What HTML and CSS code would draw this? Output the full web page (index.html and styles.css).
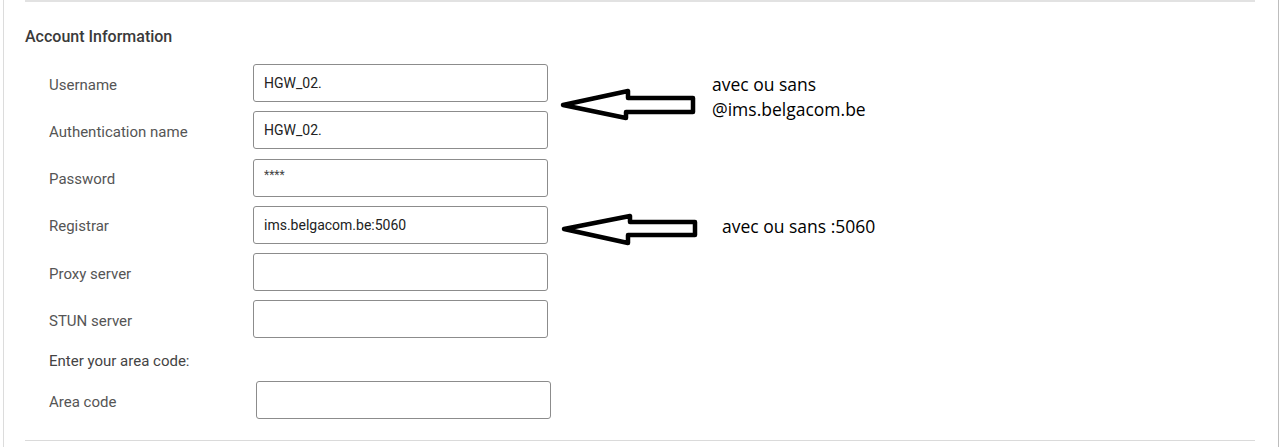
FILE: index.html
```html
<!DOCTYPE html>
<html lang="en">
<head>
    <meta charset="UTF-8">
    <meta name="viewport" content="width=device-width, initial-scale=1.0">
    <title>Account Information</title>
    <link rel="stylesheet" href="styles.css">
</head>
<body>
    <div class="page">
        <section class="panel">
            <h2 class="panel-title">Account Information</h2>

            <div class="form">
                <div class="row">
                    <label for="username">Username</label>
                    <input type="text" id="username" value="HGW_02.">
                </div>
                <div class="row">
                    <label for="authname">Authentication name</label>
                    <input type="text" id="authname" value="HGW_02.">
                </div>
                <div class="row">
                    <label for="password">Password</label>
                    <input type="text" id="password" class="secret" value="****">
                </div>
                <div class="row">
                    <label for="registrar">Registrar</label>
                    <input type="text" id="registrar" value="ims.belgacom.be:5060">
                </div>
                <div class="row">
                    <label for="proxy">Proxy server</label>
                    <input type="text" id="proxy">
                </div>
                <div class="row">
                    <label for="stun">STUN server</label>
                    <input type="text" id="stun">
                </div>

                <p class="hint">Enter your area code:</p>

                <div class="row row-area">
                    <label for="areacode">Area code</label>
                    <input type="text" id="areacode">
                </div>
            </div>
        </section>

        <!-- annotations drawn over the screenshot -->
        <svg class="arrows" width="1280" height="447" viewBox="0 0 1280 447">
            <path d="M563 105 L628 91 L628 98 L693 98 L693 112 L626 112 L626 118 Z" />
            <path d="M564 229 L630 216 L630 222 L695 222 L695 235 L628 235 L628 243 Z" />
        </svg>
        <div class="note note-user">avec ou sans<br>@ims.belgacom.be</div>
        <div class="note note-registrar">avec ou sans :5060</div>
    </div>
</body>
</html>
```

FILE: styles.css
```css
body {
    margin: 0;
    background: #fff;
    font-family: Roboto, "Liberation Sans", sans-serif;
}
.page {
    position: relative;
    height: 447px;
    margin: 0 1px 0 3px;
    border-left: 1px solid #dcdcdc;
    border-right: 1px solid #bdbdbd;
    box-sizing: border-box;
}
.panel {
    margin: 0 23px 0 21px;
    padding: 25px 0 21px;
    border-top: 2px solid #e2e2e2;
    border-bottom: 1px solid #dadada;
}
.panel-title {
    margin: 0 0 17px;
    font-size: 16px;
    line-height: 20px;
    font-weight: 500;
    color: #3a3a3a;
}
.form {
    display: flex;
    flex-direction: column;
    gap: 9.3px;
    padding-left: 24px;
}
.row {
    display: flex;
    align-items: center;
    height: 38px;
}
.row label {
    width: 204px;
    padding-top: 3px;
    font-size: 15px;
    color: #555;
}
.row input {
    width: 295px;
    height: 38px;
    box-sizing: border-box;
    padding: 0 10px;
    border: 1px solid #8c8c8c;
    border-radius: 3px;
    background: #fff;
    font-family: Roboto, "Liberation Sans", sans-serif;
    font-size: 14px;
    color: #222;
}
.row input.secret {
    font-size: 12px;
    padding-bottom: 6px;
    color: #444;
}
.row-area {
    margin-top: 1px;
}
.row-area input {
    margin-left: 3px;
}
.hint {
    margin: 3px 0 0;
    font-size: 15px;
    line-height: 20px;
    color: #444;
}
.arrows {
    position: absolute;
    top: 0;
    left: -4px;
    pointer-events: none;
}
.arrows path {
    fill: none;
    stroke: #000;
    stroke-width: 4.5;
    stroke-linejoin: round;
}
.note {
    position: absolute;
    font-family: "Open Sans", sans-serif;
    font-size: 17.5px;
    line-height: 25px;
    color: #000;
}
.note-user {
    left: 708px;
    top: 72px;
}
.note-registrar {
    left: 718px;
    top: 214px;
}
```
